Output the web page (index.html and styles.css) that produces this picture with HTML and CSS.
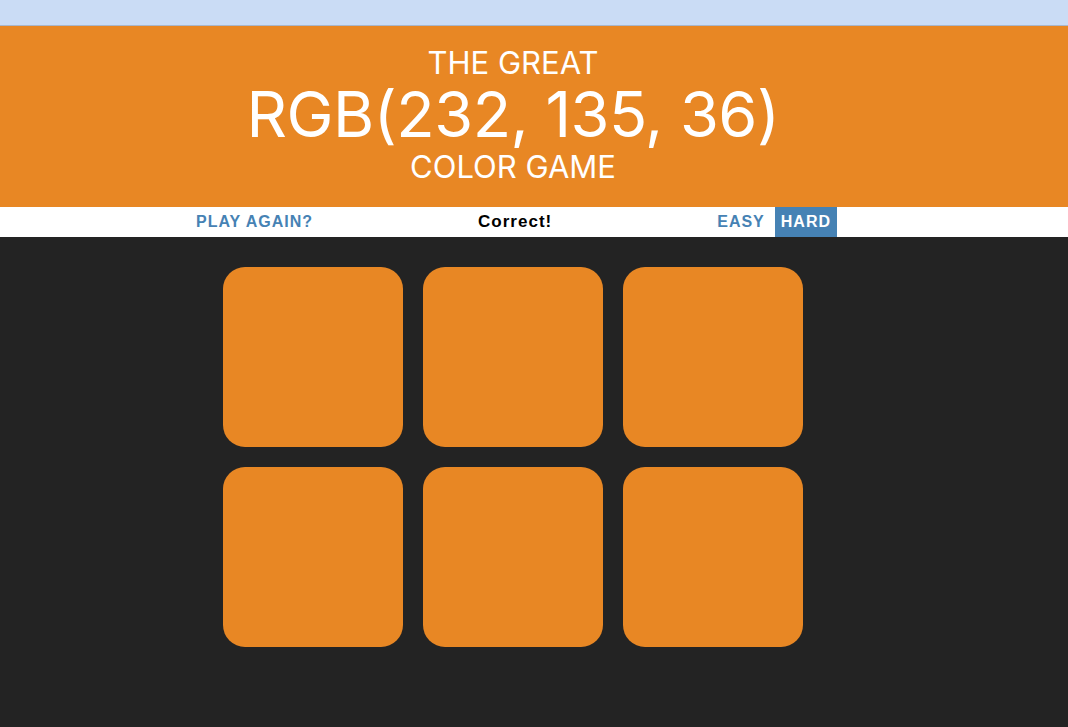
FILE: index.html
```html
<!DOCTYPE html>
<html>
<head>
<meta charset="utf-8">
<title>Color Game</title>
<link rel="stylesheet" href="styles.css">
</head>
<body>
<div class="topbar"></div>
<header class="header">
  <h1 class="title">
    <span class="title-small">THE GREAT</span>
    <span class="title-rgb">RGB(232, 135, 36)</span>
    <span class="title-small title-bottom">COLOR GAME</span>
  </h1>
</header>
<nav class="stripe">
  <div class="stripe-inner">
    <button class="btn">PLAY AGAIN?</button>
    <span class="message">Correct!</span>
    <div class="modes">
      <button class="btn">EASY</button>
      <button class="btn selected">HARD</button>
    </div>
  </div>
</nav>
<main class="board">
  <div class="square"></div>
  <div class="square"></div>
  <div class="square"></div>
  <div class="square"></div>
  <div class="square"></div>
  <div class="square"></div>
</main>
</body>
</html>
```
FILE: styles.css
```css
html, body {
  margin: 0;
  padding: 0;
}
body {
  background: #232323;
  font-family: "Liberation Sans", Arial, sans-serif;
  min-height: 727px;
}
.topbar {
  height: 25px;
  background: #cadcf5;
  border-bottom: 1px solid #a9b6ca;
}
.header {
  background: #e88724;
  height: 181px;
}
.title {
  margin: 0;
  width: 1026px;
  color: #fff;
  font-family: Inter, sans-serif;
  font-weight: 400;
  text-align: center;
  text-transform: uppercase;
  padding-top: 17px;
}
.title-small {
  display: block;
  font-size: 31px;
  line-height: 40px;
}
.title-bottom {
  margin-top: 2px;
}
.title-rgb {
  display: block;
  font-size: 63px;
  line-height: 62px;
  letter-spacing: -0.5px;
}
.stripe {
  background: #fff;
  height: 30px;
}
.stripe-inner {
  width: 647px;
  margin-left: 190px;
  height: 30px;
  display: flex;
  align-items: stretch;
}
.btn {
  border: none;
  background: none;
  padding: 0 6px;
  margin: 0;
  height: 30px;
  font-family: "Liberation Sans", Arial, sans-serif;
  font-size: 16px;
  font-weight: 700;
  letter-spacing: 1px;
  color: #4682b4;
}
.selected {
  background: #4682b4;
  color: #fff;
}
.message {
  flex: 1;
  text-align: center;
  font-size: 17px;
  font-weight: 700;
  letter-spacing: 1px;
  color: #000;
  line-height: 30px;
}
.modes {
  display: flex;
  gap: 4px;
}
.board {
  width: 600px;
  margin: 20px 0 0 213px;
  display: flex;
  flex-wrap: wrap;
}
.square {
  width: 180px;
  height: 180px;
  margin: 10px;
  border-radius: 22px;
  background: #e88724;
}
```
